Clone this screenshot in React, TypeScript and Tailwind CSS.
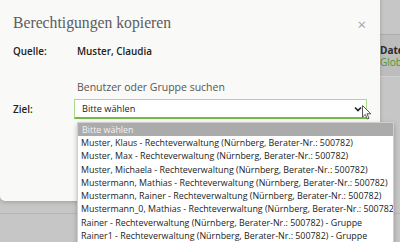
import React from 'react';

const options: string[] = [
  'Muster, Klaus - Rechteverwaltung (Nürnberg, Berater-Nr.: 500782)',
  'Muster, Max - Rechteverwaltung (Nürnberg, Berater-Nr.: 500782)',
  'Muster, Michaela - Rechteverwaltung (Nürnberg, Berater-Nr.: 500782)',
  'Mustermann, Mathias - Rechteverwaltung (Nürnberg, Berater-Nr.: 500782)',
  'Mustermann, Rainer - Rechteverwaltung (Nürnberg, Berater-Nr.: 500782)',
  'Mustermann_0, Mathias - Rechteverwaltung (Nürnberg, Berater-Nr.: 500782)',
  'Rainer - Rechteverwaltung (Nürnberg, Berater-Nr.: 500782) - Gruppe',
  'Rainer1 - Rechteverwaltung (Nürnberg, Berater-Nr.: 500782) - Gruppe',
];

const sans = "font-['Open_Sans','Noto_Sans',sans-serif]";

const App: React.FC = () => {
  return (
    <div className={`relative w-[400px] h-[242px] overflow-hidden bg-[#c6c6c6] ${sans}`}>
      {/* page behind the overlay */}
      <div className="flex flex-col">
        <div className="h-[34px]"></div>
        <div className="h-[43px] border-t border-[#acacac] border-b border-b-[#d0d0d0] bg-[#bdbdbd] pl-[380px] pt-[9px] text-[10px] leading-[12px]">
          <div className="font-bold text-[#2a2a2a]">Datei</div>
          <div className="text-[#4f9a2a]">Global</div>
        </div>
        <div className="h-[136px]"></div>
        <div className="border-t border-[#b6b6b6]"></div>
      </div>

      {/* modal */}
      <div className="absolute left-0 top-[-10px] w-[380px] h-[211px] rounded-[5px] bg-[#f9f9f7] shadow-[0_1px_4px_rgba(0,0,0,0.2)]">
        <div className="flex items-start justify-between pl-[13px] pr-[14px] pt-[23px]">
          <h2 className="font-['Liberation_Serif',serif] text-[15.7px] leading-[20px] text-[#5c5c5c]">
            Berechtigungen kopieren
          </h2>
          <span className="text-[15px] leading-[15px] text-[#a5a5a5] mt-[4px]">×</span>
        </div>

        <div className="flex pl-[13px] mt-[11px] text-[9.9px] leading-[14px] font-semibold text-[#222]">
          <div className="w-[64px]">Quelle:</div>
          <div>Muster, Claudia</div>
        </div>

        <div className="pl-[77px] mt-[23px] text-[10.5px] leading-[12px] text-[#555]">
          Benutzer oder Gruppe suchen
        </div>

        <div className="flex items-center pl-[13px] mt-[6px]">
          <div className="w-[61px] text-[9.9px] font-semibold text-[#222]">Ziel:</div>
          <div className="relative flex items-center justify-between w-[293px] h-[20px] bg-white border border-[#a9d98a] border-b-2 border-b-[#76b846] pl-[7px] pr-[4px] text-[9.2px] text-[#222]">
            <span>Bitte wählen</span>
            <svg width="8" height="6" viewBox="0 0 8 6" className="mt-[1px]">
              <path d="M1 1.5 L4 4.5 L7 1.5" fill="none" stroke="#222" strokeWidth="1.6" />
            </svg>
            {/* mouse pointer */}
            <svg width="11" height="16" viewBox="0 0 11 16" className="absolute right-[-7px] top-[5px]">
              <path d="M0.5 0.5 L0.5 12 L3.3 9.4 L5.3 14 L7 13.3 L5 8.8 L8.8 8.8 Z" fill="#fff" stroke="#444" strokeWidth="0.9" />
            </svg>
          </div>
        </div>
      </div>

      {/* open select list */}
      <div className="absolute left-[77px] top-[122px] w-[317px] h-[125px] bg-white border border-[#cfcfcf] rounded-b-[5px] shadow-[0_2px_5px_rgba(0,0,0,0.25)] text-[8.9px] leading-[13.3px] text-[#222] overflow-hidden">
        <div className="bg-[#ababab] text-[#f2f2f2] pl-[4px] h-[13px] leading-[13px]">Bitte wählen</div>
        {options.map((o) => (
          <div key={o} className="pl-[3px] whitespace-nowrap">{o}</div>
        ))}
      </div>
    </div>
  );
};

export default App;
